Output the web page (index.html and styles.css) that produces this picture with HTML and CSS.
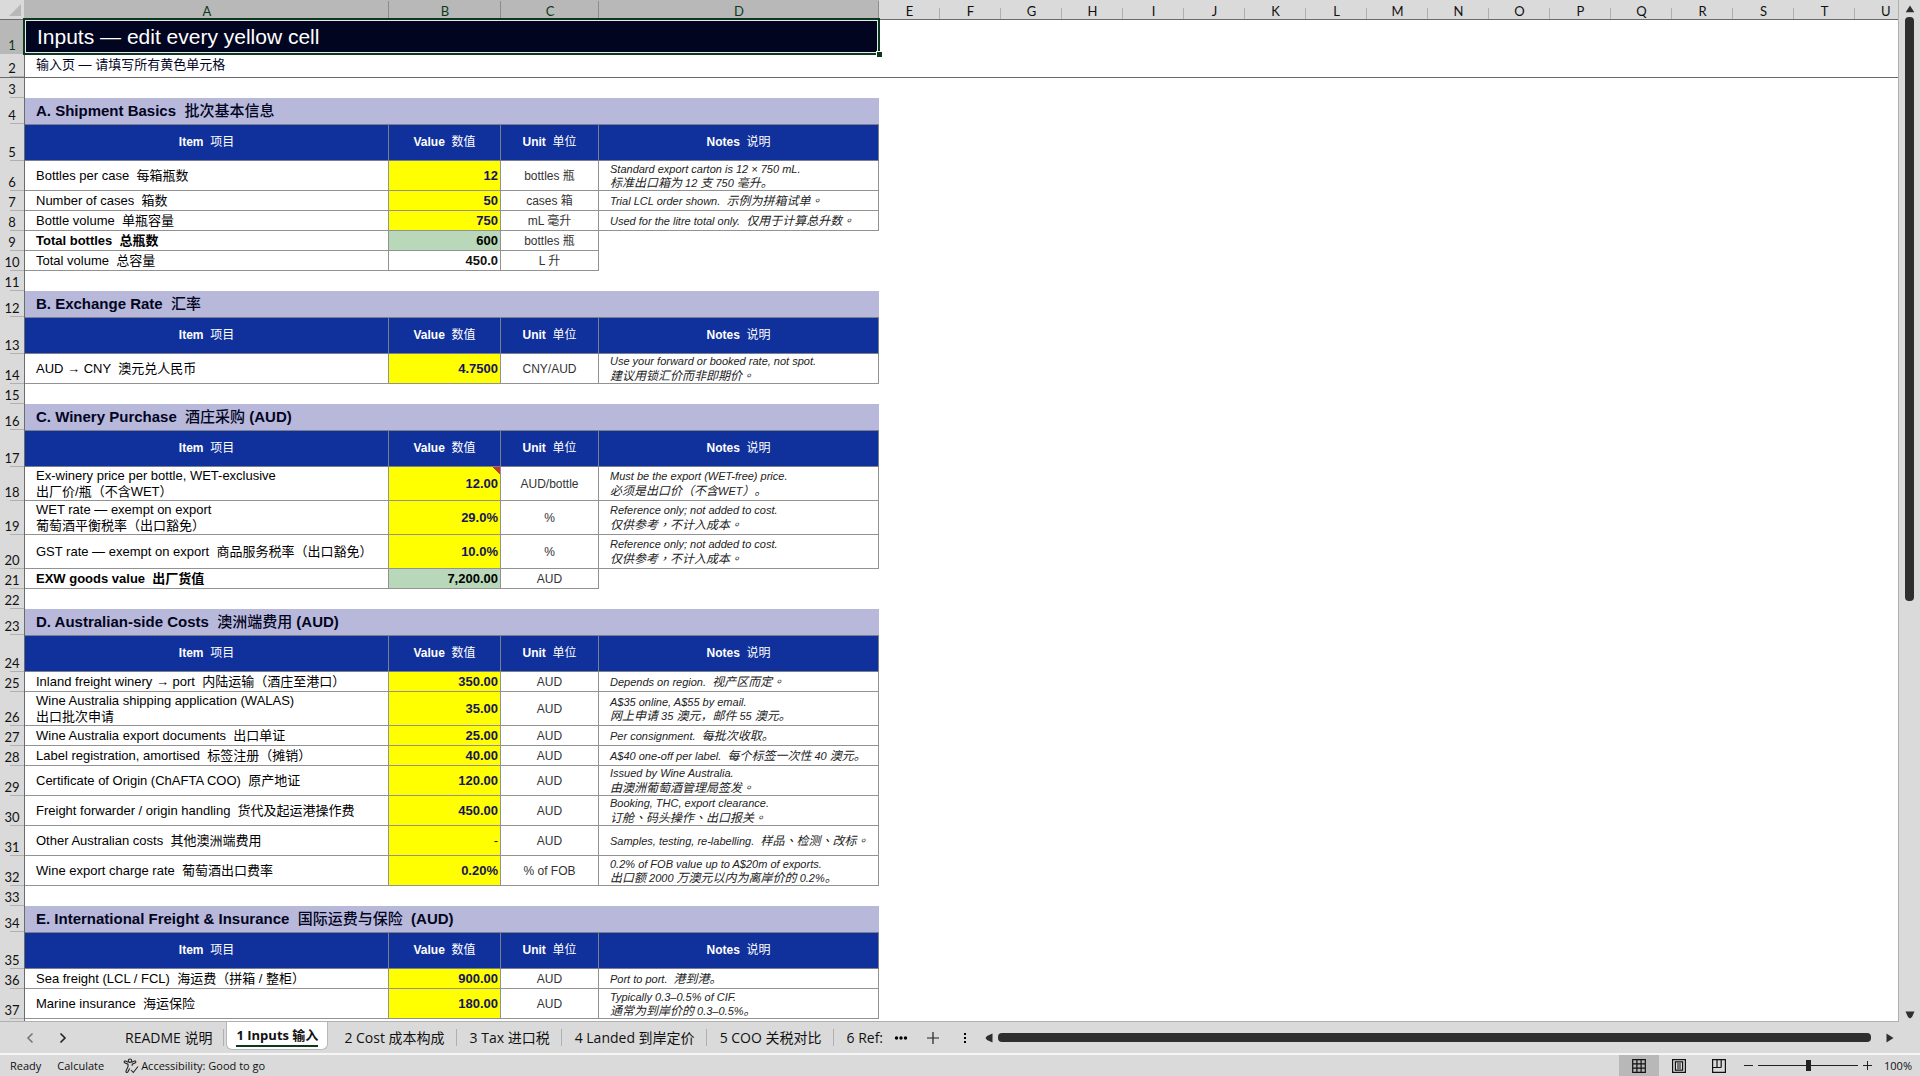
FILE: index.html
```html
<!DOCTYPE html>
<html lang="en">
<head>
<meta charset="UTF-8" />
<meta name="viewport" content="width=device-width, initial-scale=1" />
<title>Inputs | Landed Cost Workbook</title>
<link rel="stylesheet" href="styles.css">
</head>
<body>

<main class="workspace">
  <div class="sheet">
    <table>
      <colgroup>
        <col class="col-rownum"><col class="col-a"><col class="col-b"><col class="col-c"><col class="col-d">
        <col span="16" class="col-std"><col>
      </colgroup>
      <thead>
        <tr class="letters">
          <th class="corner"><svg width="12" height="12" viewBox="0 0 12 12"><path d="M12 0v12H0z" fill="#b8b8b8"/></svg></th>
          <th class="sel">A</th><th class="sel">B</th><th class="sel">C</th><th class="sel">D</th>
          <th>E</th><th>F</th><th>G</th><th>H</th><th>I</th><th>J</th><th>K</th><th>L</th><th>M</th><th>N</th><th>O</th><th>P</th><th>Q</th><th>R</th><th>S</th><th>T</th><th class="last">U</th>
        </tr>
      </thead>
      <tbody>
        <tr class="h34"><th class="sel">1</th><td class="title" colspan="4">Inputs — edit every yellow cell<span class="handle"></span></td></tr>
        <tr class="h24 frozen"><th>2</th><td class="subtitle" colspan="4">输入页 — 请填写所有黄色单元格</td><td colspan="17"></td></tr>
        <tr class="h20"><th>3</th></tr>

        <!-- A. Shipment -->
        <tr class="h26"><th>4</th><td class="section" colspan="4">A. Shipment Basics&nbsp; <span>批次基本信息</span></td></tr>
        <tr class="heads"><th>5</th><td>Item&nbsp; <span>项目</span></td><td>Value&nbsp; <span>数值</span></td><td>Unit&nbsp; <span>单位</span></td><td>Notes&nbsp; <span>说明</span></td></tr>
        <tr class="h30"><th>6</th><td class="item">Bottles per case&nbsp; <span>每箱瓶数</span></td><td class="value input">12</td><td class="unit">bottles 瓶</td><td class="note">Standard export carton is 12 × 750 mL.<br><span>标准出口箱为</span> 12 <span>支</span> 750 <span>毫升。</span></td></tr>
        <tr class="h20"><th>7</th><td class="item">Number of cases&nbsp; <span>箱数</span></td><td class="value input">50</td><td class="unit">cases 箱</td><td class="note">Trial LCL order shown.&nbsp; <span>示例为拼箱试单<b>。</b></span></td></tr>
        <tr class="h20"><th>8</th><td class="item">Bottle volume&nbsp; <span>单瓶容量</span></td><td class="value input">750</td><td class="unit">mL 毫升</td><td class="note">Used for the litre total only.&nbsp; <span>仅用于计算总升数<b>。</b></span></td></tr>
        <tr class="h20"><th>9</th><td class="item total">Total bottles&nbsp; <span>总瓶数</span></td><td class="value result">600</td><td class="unit">bottles 瓶</td></tr>
        <tr class="h20"><th>10</th><td class="item">Total volume&nbsp; <span>总容量</span></td><td class="value">450.0</td><td class="unit">L 升</td></tr>
        <tr class="h20"><th>11</th></tr>

        <!-- B. FX -->
        <tr class="h26"><th>12</th><td class="section" colspan="4">B. Exchange Rate&nbsp; <span>汇率</span></td></tr>
        <tr class="heads"><th>13</th><td>Item&nbsp; <span>项目</span></td><td>Value&nbsp; <span>数值</span></td><td>Unit&nbsp; <span>单位</span></td><td>Notes&nbsp; <span>说明</span></td></tr>
        <tr class="h30"><th>14</th><td class="item">AUD → CNY&nbsp; <span>澳元兑人民币</span></td><td class="value input">4.7500</td><td class="unit">CNY/AUD</td><td class="note">Use your forward or booked rate, not spot.<br><span>建议用锁汇价而非即期价<b>。</b></span></td></tr>
        <tr class="h20"><th>15</th></tr>

        <!-- C. Winery -->
        <tr class="h26"><th>16</th><td class="section" colspan="4">C. Winery Purchase&nbsp; <span>酒庄采购</span> (AUD)</td></tr>
        <tr class="heads"><th>17</th><td>Item&nbsp; <span>项目</span></td><td>Value&nbsp; <span>数值</span></td><td>Unit&nbsp; <span>单位</span></td><td>Notes&nbsp; <span>说明</span></td></tr>
        <tr class="h34"><th>18</th><td class="item">Ex-winery price per bottle, WET-exclusive<br><span>出厂价</span>/<span>瓶（不含</span>WET<span>）</span></td><td class="value input comment">12.00</td><td class="unit">AUD/bottle</td><td class="note">Must be the export (WET-free) price.<br><span>必须是出口价<b>（</b>不含</span>WET<span><b>）</b>。</span></td></tr>
        <tr class="h34"><th>19</th><td class="item">WET rate — exempt on export<br><span>葡萄酒平衡税率（出口豁免）</span></td><td class="value input">29.0%</td><td class="unit">%</td><td class="note">Reference only; not added to cost.<br><span>仅供参考<b>，</b>不计入成本<b>。</b></span></td></tr>
        <tr class="h34"><th>20</th><td class="item">GST rate — exempt on export&nbsp; <span>商品服务税率<b>（</b>出口豁免<b>）</b></span></td><td class="value input">10.0%</td><td class="unit">%</td><td class="note">Reference only; not added to cost.<br><span>仅供参考<b>，</b>不计入成本<b>。</b></span></td></tr>
        <tr class="h20"><th>21</th><td class="item total">EXW goods value&nbsp; <span>出厂货值</span></td><td class="value result">7,200.00</td><td class="unit">AUD</td></tr>
        <tr class="h20"><th>22</th></tr>

        <!-- D. Australian side -->
        <tr class="h26"><th>23</th><td class="section" colspan="4">D. Australian-side Costs&nbsp; <span>澳洲端费用</span> (AUD)</td></tr>
        <tr class="heads"><th>24</th><td>Item&nbsp; <span>项目</span></td><td>Value&nbsp; <span>数值</span></td><td>Unit&nbsp; <span>单位</span></td><td>Notes&nbsp; <span>说明</span></td></tr>
        <tr class="h20"><th>25</th><td class="item">Inland freight winery → port&nbsp; <span>内陆运输<b>（</b>酒庄至港口<b>）</b></span></td><td class="value input">350.00</td><td class="unit">AUD</td><td class="note">Depends on region.&nbsp; <span>视产区而定<b>。</b></span></td></tr>
        <tr class="h34"><th>26</th><td class="item">Wine Australia shipping application (WALAS)<br><span>出口批次申请</span></td><td class="value input">35.00</td><td class="unit">AUD</td><td class="note">A$35 online, A$55 by email.<br><span>网上申请</span> 35 <span>澳元，邮件</span> 55 <span>澳元。</span></td></tr>
        <tr class="h20"><th>27</th><td class="item">Wine Australia export documents&nbsp; <span>出口单证</span></td><td class="value input">25.00</td><td class="unit">AUD</td><td class="note">Per consignment.&nbsp; <span>每批次收取。</span></td></tr>
        <tr class="h20"><th>28</th><td class="item">Label registration, amortised&nbsp; <span>标签注册<b>（</b>摊销<b>）</b></span></td><td class="value input">40.00</td><td class="unit">AUD</td><td class="note">A$40 one-off per label.&nbsp; <span>每个标签一次性</span> 40 <span>澳元。</span></td></tr>
        <tr class="h30"><th>29</th><td class="item">Certificate of Origin (ChAFTA COO)&nbsp; <span>原产地证</span></td><td class="value input">120.00</td><td class="unit">AUD</td><td class="note">Issued by Wine Australia.<br><span>由澳洲葡萄酒管理局签发<b>。</b></span></td></tr>
        <tr class="h30"><th>30</th><td class="item">Freight forwarder / origin handling&nbsp; <span>货代及起运港操作费</span></td><td class="value input">450.00</td><td class="unit">AUD</td><td class="note">Booking, THC, export clearance.<br><span>订舱<b>、</b>码头操作<b>、</b>出口报关<b>。</b></span></td></tr>
        <tr class="h30"><th>31</th><td class="item">Other Australian costs&nbsp; <span>其他澳洲端费用</span></td><td class="value input nil">-</td><td class="unit">AUD</td><td class="note">Samples, testing, re-labelling.&nbsp; <span>样品<b>、</b>检测<b>、</b>改标<b>。</b></span></td></tr>
        <tr class="h30"><th>32</th><td class="item">Wine export charge rate&nbsp; <span>葡萄酒出口费率</span></td><td class="value input">0.20%</td><td class="unit">% of FOB</td><td class="note">0.2% of FOB value up to A$20m of exports.<br><span>出口额</span> 2000 <span>万澳元以内为离岸价的</span> 0.2%<span>。</span></td></tr>
        <tr class="h20"><th>33</th></tr>

        <!-- E. Freight and insurance -->
        <tr class="h26"><th>34</th><td class="section" colspan="4">E. International Freight &amp; Insurance&nbsp; <span>国际运费与保险</span>&nbsp; (AUD)</td></tr>
        <tr class="heads"><th>35</th><td>Item&nbsp; <span>项目</span></td><td>Value&nbsp; <span>数值</span></td><td>Unit&nbsp; <span>单位</span></td><td>Notes&nbsp; <span>说明</span></td></tr>
        <tr class="h20"><th>36</th><td class="item">Sea freight (LCL / FCL)&nbsp; <span>海运费<b>（</b>拼箱 / 整柜<b>）</b></span></td><td class="value input">900.00</td><td class="unit">AUD</td><td class="note">Port to port.&nbsp; <span>港到港。</span></td></tr>
        <tr class="h30"><th>37</th><td class="item">Marine insurance&nbsp; <span>海运保险</span></td><td class="value input">180.00</td><td class="unit">AUD</td><td class="note">Typically 0.3–0.5% of CIF.<br><span>通常为到岸价的</span> 0.3–0.5%<span>。</span></td></tr>
        <tr class="h20"><th></th></tr>
      </tbody>
    </table>
  </div>

  <div class="vscroll">
    <button aria-label="Scroll up"><svg width="10" height="8" viewBox="0 0 10 8"><path d="M5 0.5 9.3 7.3H0.7z"/></svg></button>
    <div class="vtrack"><div class="vthumb"></div></div>
    <button aria-label="Scroll down"><svg width="10" height="8" viewBox="0 0 10 8"><path d="M0.5 0.5h9L7 6 5 7.5 3 6z"/></svg></button>
  </div>
</main>

<nav class="tabbar">
  <button class="arrow dim" aria-label="Previous sheet"><svg width="8" height="12" viewBox="0 0 8 12"><path d="M6.5 1.5 2 6l4.500 4.500"/></svg></button>
  <button class="arrow" aria-label="Next sheet"><svg width="8" height="12" viewBox="0 0 8 12"><path d="M1.500 1.500 6 6l-4.500 4.500"/></svg></button>
  <div class="tabs">
    <button class="tab">README 说明</button>
    <button class="tab active"><span>1 Inputs 输入</span></button>
    <button class="tab">2 Cost 成本构成</button>
    <button class="tab">3 Tax 进口税</button>
    <button class="tab">4 Landed 到岸定价</button>
    <button class="tab">5 COO 关税对比</button>
    <button class="tab cut">6 Ref:</button>
  </div>
  <button class="more" aria-label="More sheets"><svg width="14" height="4" viewBox="0 0 14 4"><circle cx="2.500" cy="2" r="1.700"/><circle cx="7" cy="2" r="1.700"/><circle cx="11.500" cy="2" r="1.700"/></svg></button>
  <button class="add" aria-label="New sheet"><svg width="12" height="12" viewBox="0 0 12 12"><path d="M6 0v12M0 6h12" stroke="#222" stroke-width="1.200"/></svg></button>
  <button class="grip" aria-label="Resize tabs"><svg width="4" height="12" viewBox="0 0 4 12"><path d="M1 1h2v2H1zM1 5h2v2H1zM1 9h2v2H1z"/></svg></button>
  <div class="hscroll">
    <button aria-label="Scroll left"><svg width="8" height="10" viewBox="0 0 8 10"><path d="M7.500 0.500v9L2 7 0.500 5 2 3z"/></svg></button>
    <div class="htrack"></div>
    <button aria-label="Scroll right"><svg width="8" height="10" viewBox="0 0 8 10"><path d="M0.500 0.500v9L7.500 5z"/></svg></button>
  </div>
</nav>

<footer class="status">
  <span class="ready">Ready</span>
  <span class="calc">Calculate</span>
  <button class="access">
    <svg width="16" height="16" viewBox="0 0 16 16" fill="none" stroke="#222" stroke-width="1.100"><circle cx="7" cy="2.700" r="1.700"/><path d="M5.300 4.300 2.500 3C1 2.600 0.700 4.500 2 5l3 1.200v2.500L3 13c-.5 1.600 1.400 2 2 .8l1.600-3.300M8.700 4.300 11.500 3c1.500-.4 1.800 1.500.5 2L9.200 6.200v1.500M8 12l2.300 2.500L15 8.500"/></svg>
    Accessibility: Good to go
  </button>
  <div class="views">
    <button class="view on" aria-label="Normal view"><svg width="14" height="14" viewBox="0 0 14 14"><path d="M.7.7h12.600v12.600H.7zM4.900.7v12.600M9.100.7v12.600M.7 4.900h12.600M.7 9.100h12.600"/></svg></button>
    <button class="view" aria-label="Page layout"><svg width="14" height="14" viewBox="0 0 14 14"><path d="M.6.6h12.800v12.800H.6zM3.400 2.800h7.200v8.400H3.400zM5 5h4M5 7h4M5 9h4"/></svg></button>
    <button class="view" aria-label="Page break preview"><svg width="14" height="14" viewBox="0 0 14 14"><path d="M.6.6h12.800v12.800H.6zM5 .6v7.900M9.200.6v7.900M.6 8.500h8.600"/></svg></button>
  </div>
  <button class="zoombtn" aria-label="Zoom out"><svg width="9" height="9" viewBox="0 0 9 9"><path d="M0 4.500h9"/></svg></button>
  <input class="zoom" type="range" min="0" max="100" value="50" aria-label="Zoom">
  <button class="zoombtn" aria-label="Zoom in"><svg width="9" height="9" viewBox="0 0 9 9"><path d="M0 4.500h9M4.500 0v9"/></svg></button>
  <span class="percent">100%</span>
</footer>

</body>
</html>
```
FILE: styles.css
```css
* {
  box-sizing: border-box;
}
body {
  margin: 0;
  height: 100vh;
  display: flex;
  flex-direction: column;
  overflow: hidden;
  background: #dadada;
  color: #111;
  font-family: "Open Sans", "Noto Sans CJK SC", sans-serif;
}
button {
  border: none;
  background: none;
  padding: 0;
  font: inherit;
  color: inherit;
  display: flex;
  align-items: center;
  justify-content: center;
}
svg {
  display: block;
}

/* Sheet */
.workspace {
  flex: 1;
  min-height: 0;
  display: flex;
}
.sheet {
  flex: 1;
  min-width: 0;
  overflow: hidden;
  background: #fff;
  border-right: 1px solid #b0b0b0;
  border-bottom: 1px solid #b0b0b0;
}
table {
  width: 100%;
  table-layout: fixed;
  border-collapse: separate;
  border-spacing: 0;
  font-family: "Liberation Sans", "Noto Sans CJK SC", sans-serif;
  text-spacing-trim: space-all;
}
.col-rownum { width: 25px; }
.col-a { width: 364px; }
.col-b { width: 112px; }
.col-c { width: 98px; }
.col-d { width: 280px; }
.col-std { width: 61px; }
th, td {
  padding: 0;
  white-space: nowrap;
}
th {
  background: linear-gradient(#b0b0b0, #b0b0b0) no-repeat right bottom / 14px 1px #dadada;
  border-right: 1px solid #6b6b6b;
  font-family: Lato, sans-serif;
  font-size: 13px;
  font-weight: 400;
  line-height: 16px;
  vertical-align: bottom;
  padding-bottom: 1px;
}
.letters th {
  height: 20px;
  padding: 2px 0 0;
  vertical-align: middle;
  border-right: none;
  border-bottom: 1px solid #6b6b6b;
  background: linear-gradient(#b0b0b0, #b0b0b0) no-repeat right bottom / 1px 11px #dadada;
}
.letters th.sel {
  background: linear-gradient(#8c8c8c, #8c8c8c) no-repeat right bottom / 1px 18px #b8b8b8;
  color: #0b3a1b;
}
.letters .last {
  text-align: left;
  padding-left: 26px;
  background: #dadada;
}
.letters .corner {
  background: #dadada;
  border-right: 1px solid #b8b8b8;
  padding: 0 0 0 9px;
}
th.sel {
  background: #b8b8b8;
  color: #0b3a1b;
}
.h20 { height: 20px; }
.h24 { height: 24px; }
.h26 { height: 26px; }
.h30 { height: 30px; }
.h34 { height: 34px; }
.heads { height: 37px; }
.frozen th, .frozen td {
  border-bottom: 1px solid #6b6b6b;
}

.title {
  position: relative;
  background: #02051f;
  color: #fff;
  font-size: 21px;
  line-height: 24px;
  padding-left: 12px;
}
.title::after {
  content: "";
  position: absolute;
  inset: -2px -1px -1px -2px;
  border: 2px solid #0b3a1b;
  box-shadow: inset 0 0 0 1px #e8e8f4;
}
.handle {
  position: absolute;
  z-index: 1;
  right: -3px;
  bottom: -3px;
  width: 6px;
  height: 6px;
  background: #0b3a1b;
  border-top: 1px solid #fff;
  border-left: 1px solid #fff;
}
.subtitle {
  padding: 0 0 2px 11px;
  font-size: 13px;
  line-height: 18px;
  color: #02051f;
}
.section {
  background: #b8b8da;
  color: #02051f;
  font-size: 15px;
  font-weight: 700;
  line-height: 20px;
  padding: 0 0 1px 11px;
}
.section span {
  font-weight: 500;
}
.heads td {
  background: #10309b;
  color: #fff;
  font-size: 12px;
  font-weight: 700;
  line-height: 16px;
  text-align: center;
  border-top: 1px solid #7a7f8c;
  border-right: 1px solid #7a7f8c;
  border-bottom: 1px solid #7a7f8c;
  padding-bottom: 1px;
}
.heads span {
  font-weight: 400;
}
.item, .value, .unit, .note {
  border-right: 1px solid #929292;
  border-bottom: 1px solid #929292;
}
.item {
  padding-left: 11px;
  font-size: 13px;
  line-height: 16px;
  color: #000;
}
.total {
  font-weight: 700;
}
.value {
  padding-right: 2px;
  font-size: 13px;
  font-weight: 700;
  line-height: 16px;
  text-align: right;
}
.input {
  background: #ff0;
  color: #15155a;
}
.nil {
  font-weight: 400;
}
.result {
  background: #b8d8b9;
  color: #000;
}
.comment {
  background: linear-gradient(225deg, #c0392b 5px, transparent 5px) #ff0;
}
.unit {
  font-size: 12px;
  line-height: 16px;
  text-align: center;
  color: #333;
}
.note {
  padding-left: 11px;
  font-size: 11px;
  font-style: italic;
  line-height: 14px;
  color: #222;
}
.note span {
  font-size: 12px;
}
/* centred full-width punctuation */
.item b, .note b {
  font-family: "Noto Sans CJK TC", sans-serif;
  font-weight: 400;
}

/* Scrollbars */
.vscroll {
  width: 21px;
  padding: 5px 0 3px;
  display: flex;
  flex-direction: column;
  align-items: center;
  fill: #2e2e2e;
}
.vtrack {
  flex: 1;
  margin: 4px 0;
}
.vthumb {
  width: 9px;
  height: 59%;
  border-radius: 4px;
  background: #2e2e2e;
}
.hscroll {
  flex: 1;
  display: flex;
  align-items: center;
  gap: 5px;
  padding: 0 26px 0 18px;
  fill: #2e2e2e;
}
.htrack {
  flex: 1;
  height: 9px;
  margin-right: 10px;
  border-radius: 4px;
  background: #2e2e2e;
}

/* Sheet tabs */
.tabbar {
  height: 31px;
  display: flex;
  align-items: center;
  padding-left: 26px;
  font-size: 14px;
}
.arrow {
  width: 8px;
  margin-right: 25px;
}
.arrow path {
  fill: none;
  stroke: #222;
  stroke-width: 1.6;
}
.dim path {
  stroke: #777;
}
.tabs {
  display: flex;
  height: 31px;
  padding-left: 20px;
}
.tab {
  position: relative;
  height: 31px;
  padding: 0 12px 0 13px;
  line-height: 20px;
  white-space: nowrap;
}
.tab::after {
  content: "";
  position: absolute;
  right: 0;
  top: 7px;
  width: 1px;
  height: 17px;
  background: #b0b0b0;
}
.active {
  height: 28px;
  margin: 0 3px 0 2px;
  padding: 0 9px;
  background: #fff;
  border: 1px solid #b8b8b8;
  border-top: none;
  border-radius: 0 0 6px 6px;
  font-size: 13px;
  font-weight: 700;
}
.active::after {
  display: none;
}
.active span {
  border-bottom: 2px solid #0b3a1b;
}
.cut {
  width: 52px;
  padding-right: 0;
  justify-content: flex-start;
}
.cut::after {
  display: none;
}
.more {
  margin: 0 19px 0 8px;
}
.grip {
  margin-left: 24px;
}

/* Status bar */
.status {
  height: 23px;
  display: flex;
  align-items: center;
  border-top: 2px solid #f6f6f6;
  padding: 0 8px 0 10px;
  font-size: 11px;
  line-height: 16px;
}
.calc {
  margin: 0 19px 0 16px;
}
.access {
  gap: 2px;
}
.views {
  display: flex;
  height: 21px;
  margin-left: auto;
  margin-right: 5px;
}
.view {
  width: 40px;
  height: 21px;
}
.view path {
  fill: none;
  stroke: #111;
  stroke-width: 1.2;
}
.on {
  background: #b8b8b8;
}
.zoombtn {
  width: 9px;
}
.zoombtn path {
  stroke: #222;
}
.zoom {
  appearance: none;
  width: 100px;
  height: 11px;
  margin: 0 5px;
  background: linear-gradient(#222, #222) no-repeat center / 100% 1px;
}
.zoom::-webkit-slider-thumb {
  appearance: none;
  width: 5px;
  height: 11px;
  background: #222;
}
.percent {
  margin-left: 12px;
}
```
